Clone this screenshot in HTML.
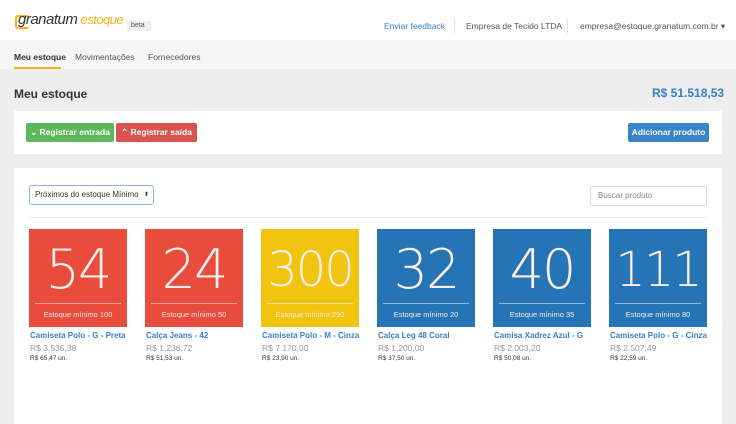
<!DOCTYPE html>
<html><head><meta charset="utf-8"><style>
*{box-sizing:border-box;margin:0;padding:0}
body{width:736px;height:424px;overflow:hidden;background:#eeeeee;font-family:"Liberation Sans",sans-serif;font-size:9px;color:#333;position:relative}
.hdr{position:absolute;left:0;top:0;width:736px;height:40px;background:#fff}
.nav{position:absolute;left:0;top:40px;width:736px;height:29px;background:#f6f6f6}
.a{position:absolute;white-space:nowrap}
.panel{position:absolute;background:#fff;left:14px;width:708px}
.btn{position:absolute;height:19px;border-radius:2px;color:#fff;font-weight:bold;font-size:8.5px;line-height:19px;text-align:center}
.card{position:absolute;top:229px;width:98px;height:98px;color:#fff}
.card .n{position:absolute;top:9px;width:100%;text-align:center;font-family:"DejaVu Sans ExtraLight","DejaVu Sans",sans-serif;font-size:54px;font-weight:200;color:#fdeee8;letter-spacing:-2px}
.card .l{position:absolute;top:74px;left:6px;right:6px;border-top:1px solid rgba(255,255,255,.5)}
.card .m{position:absolute;top:81px;width:100%;text-align:center;font-size:7.5px;color:#fbe9e4}
.t{position:absolute;top:331px;font-size:8px;font-weight:bold;color:#3a7fc8;white-space:nowrap}
.p{position:absolute;top:343px;font-size:8.5px;color:#999;white-space:nowrap}
.u{position:absolute;top:355px;font-size:6.5px;color:#333;white-space:nowrap}
</style></head><body>
<div class="hdr"></div>
<div class="a" style="left:15px;top:15px;width:13px;height:14px;border:2px solid #f2b21e;border-right:none;border-radius:3px 0 0 3px"></div>
<div class="a" style="left:18px;top:11px;font-size:15px;font-style:italic;color:#333;letter-spacing:-0.5px">granatum<span style="color:#f2b21e;font-size:13px"> estoque</span></div>
<div class="a" style="left:127px;top:21px;width:24px;height:10px;background:#eef0f2;font-size:7px;color:#555;line-height:10px;padding-left:4px">beta</div>
<div class="a" style="left:384px;top:21px;color:#3a7fc8;font-size:8.5px">Enviar feedback</div>
<div class="a" style="left:454px;top:19px;width:1px;height:14px;background:#e3e3e3"></div>
<div class="a" style="left:466px;top:21px;color:#555;font-size:8.5px">Empresa de Tecido LTDA</div>
<div class="a" style="left:567px;top:19px;width:1px;height:14px;background:#e3e3e3"></div>
<div class="a" style="left:580px;top:21px;color:#555;font-size:8.5px">empresa@estoque.granatum.com.br ▾</div>
<div class="nav"></div>
<div class="a" style="left:14px;top:52px;font-size:8.5px;font-weight:bold">Meu estoque</div>
<div class="a" style="left:14px;top:67px;width:47px;height:2px;background:#f2b21e"></div>
<div class="a" style="left:75px;top:52px;font-size:8.5px;color:#555">Movimentações</div>
<div class="a" style="left:148px;top:52px;font-size:8.5px;color:#555">Fornecedores</div>
<div class="a" style="left:14px;top:87px;font-size:12px;font-weight:bold">Meu estoque</div>
<div class="a" style="left:652px;top:86px;font-size:12px;font-weight:bold;color:#3a7fc8">R$ 51.518,53</div>
<div class="panel" style="top:111px;height:43px"></div>
<div class="btn" style="left:26px;top:123px;width:88px;background:#5cb85c">⌄ Registrar entrada</div>
<div class="btn" style="left:116px;top:123px;width:81px;background:#d9534f">⌃ Registrar saída</div>
<div class="btn" style="left:628px;top:123px;width:81px;background:#3a84c9">Adicionar produto</div>
<div class="panel" style="top:168px;height:256px"></div>
<div class="a" style="left:29px;top:185px;width:125px;height:20px;border:1px solid #8fb6e0;border-radius:3px;font-size:8px;line-height:18px;padding-left:5px;color:#333">Próximos do estoque Mínimo <span style="position:absolute;right:4px;font-size:6px">⬍</span></div>
<div class="a" style="left:590px;top:186px;width:117px;height:20px;border:1px solid #ddd;border-radius:2px;font-size:8px;line-height:18px;padding-left:7px;color:#888">Buscar produto</div>
<div class="a" style="left:29px;top:217px;width:678px;height:1px;background:#eee"></div>

<div class="card" style="left:29px;background:#e84c3d"><div class="n">54</div><div class="l"></div><div class="m">Estoque mínimo 100</div></div>
<div class="card" style="left:145px;background:#e84c3d"><div class="n">24</div><div class="l"></div><div class="m">Estoque mínimo 50</div></div>
<div class="card" style="left:261px;background:#f1c40f"><div class="n" style="font-size:48px;top:13px">300</div><div class="l"></div><div class="m">Estoque mínimo 290</div></div>
<div class="card" style="left:377px;background:#2574b5"><div class="n">32</div><div class="l"></div><div class="m">Estoque mínimo 20</div></div>
<div class="card" style="left:493px;background:#2574b5"><div class="n">40</div><div class="l"></div><div class="m">Estoque mínimo 35</div></div>
<div class="card" style="left:609px;background:#2574b5"><div class="n" style="font-size:48px;top:13px">111</div><div class="l"></div><div class="m">Estoque mínimo 80</div></div>

<div class="t" style="left:30px">Camiseta Polo - G - Preta</div><div class="p" style="left:30px">R$ 3.535,38</div><div class="u" style="left:30px">R$ 65,47 un.</div>
<div class="t" style="left:146px">Calça Jeans - 42</div><div class="p" style="left:146px">R$ 1.236,72</div><div class="u" style="left:146px">R$ 51,53 un.</div>
<div class="t" style="left:262px">Camiseta Polo - M - Cinza</div><div class="p" style="left:262px">R$ 7.170,00</div><div class="u" style="left:262px">R$ 23,90 un.</div>
<div class="t" style="left:378px">Calça Leg 48 Coral</div><div class="p" style="left:378px">R$ 1.200,00</div><div class="u" style="left:378px">R$ 37,50 un.</div>
<div class="t" style="left:494px">Camisa Xadrez Azul - G</div><div class="p" style="left:494px">R$ 2.003,20</div><div class="u" style="left:494px">R$ 50,08 un.</div>
<div class="t" style="left:610px">Camiseta Polo - G - Cinza</div><div class="p" style="left:610px">R$ 2.507,49</div><div class="u" style="left:610px">R$ 22,59 un.</div>
</body></html>
